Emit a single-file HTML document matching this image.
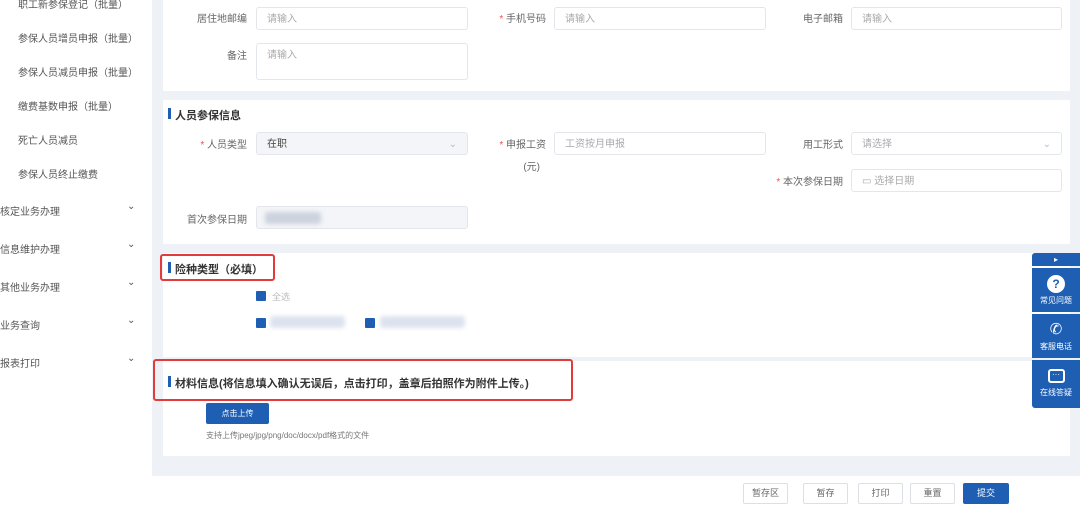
<!DOCTYPE html>
<html><head><meta charset="utf-8"><style>
*{margin:0;padding:0;box-sizing:border-box}
body{width:1080px;height:505px;overflow:hidden;background:#eef1f5;font-family:"Liberation Sans","Noto Sans CJK SC",sans-serif;font-size:10px;color:#666;position:relative}
.a{position:absolute}
.side{left:0;top:0;width:152px;height:505px;background:#fff}
.side div{position:absolute;font-size:10px;color:#555;white-space:nowrap}
.chev{color:#aaa;font-size:9px}
.card{background:#fff;position:absolute;left:163px;width:907px}
.lbl{position:absolute;font-size:10px;color:#666;text-align:right;white-space:nowrap;margin-top:-2px}
.lbl b{color:#e55;font-weight:normal}
.inp{position:absolute;border:1px solid #e3e6eb;border-radius:3px;background:#fff;color:#aaa;font-size:10px;padding:0 10px;line-height:24px;height:23px}
.h{position:absolute;font-size:11px;font-weight:bold;color:#333;padding-left:7px;white-space:nowrap}
.h:before{content:"";position:absolute;left:0;top:1px;width:3px;height:11px;background:#1e5fb4}
.red{position:absolute;border:2px solid #e23b3b;border-radius:3px}
.cb{position:absolute;width:10px;height:10px;background:#1e5fb4;border-radius:1px}
.blur{position:absolute;height:12px;background:#dde3ee;border-radius:3px;filter:blur(2px)}
.btn{position:absolute;top:483px;height:21px;border:1px solid #dcdfe6;background:#fff;font-size:9px;color:#666;text-align:center;line-height:19px;border-radius:2px}
.fl{position:absolute;left:1032px;width:48px;background:#1e5fb4;color:#fff;text-align:center;font-size:8px}
</style></head><body>
<div class="a side">
<div style="left:18px;top:-4px">职工新参保登记（批量）</div>
<div style="left:18px;top:30px">参保人员增员申报（批量）</div>
<div style="left:18px;top:64px">参保人员减员申报（批量）</div>
<div style="left:18px;top:98px">缴费基数申报（批量）</div>
<div style="left:18px;top:132px">死亡人员减员</div>
<div style="left:18px;top:166px">参保人员终止缴费</div>
<div style="left:0;top:203px">核定业务办理</div><div class="chev" style="left:127px;top:201px">⌄</div>
<div style="left:0;top:241px">信息维护办理</div><div class="chev" style="left:127px;top:239px">⌄</div>
<div style="left:0;top:279px">其他业务办理</div><div class="chev" style="left:127px;top:277px">⌄</div>
<div style="left:0;top:317px">业务查询</div><div class="chev" style="left:127px;top:315px">⌄</div>
<div style="left:0;top:355px">报表打印</div><div class="chev" style="left:127px;top:353px">⌄</div>
</div>

<div class="card" style="top:0;height:91px"></div>
<div class="lbl" style="left:190px;width:57px;top:12px">居住地邮编</div>
<div class="inp" style="left:256px;top:7px;width:212px">请输入</div>
<div class="lbl" style="left:480px;width:66px;top:12px"><b>* </b>手机号码</div>
<div class="inp" style="left:554px;top:7px;width:212px">请输入</div>
<div class="lbl" style="left:780px;width:63px;top:12px">电子邮箱</div>
<div class="inp" style="left:851px;top:7px;width:211px">请输入</div>
<div class="lbl" style="left:190px;width:57px;top:49px">备注</div>
<div class="inp" style="left:256px;top:43px;width:212px;height:37px">请输入</div>

<div class="card" style="top:100px;height:144px"></div>
<div class="h" style="left:168px;top:107px">人员参保信息</div>
<div class="lbl" style="left:180px;width:67px;top:138px"><b>* </b>人员类型</div>
<div class="inp" style="left:256px;top:132px;width:212px;background:#f3f5f8;color:#444">在职<span style="float:right;color:#bbb">⌄</span></div>
<div class="lbl" style="left:480px;width:66px;top:138px"><b>* </b>申报工资</div>
<div class="lbl" style="left:500px;width:40px;top:160px">(元)</div>
<div class="inp" style="left:554px;top:132px;width:212px">工资按月申报</div>
<div class="lbl" style="left:780px;width:63px;top:138px">用工形式</div>
<div class="inp" style="left:851px;top:132px;width:211px">请选择<span style="float:right;color:#bbb">⌄</span></div>
<div class="lbl" style="left:760px;width:83px;top:175px"><b>* </b>本次参保日期</div>
<div class="inp" style="left:851px;top:169px;width:211px">▭ 选择日期</div>
<div class="lbl" style="left:180px;width:67px;top:213px">首次参保日期</div>
<div class="inp" style="left:256px;top:206px;width:212px;background:#f3f5f8"></div>
<div class="blur" style="left:265px;top:212px;width:56px;background:#ccd3de"></div>

<div class="card" style="top:253px;height:104px"></div>
<div class="h" style="left:168px;top:261px">险种类型（必填）</div>
<div class="red" style="left:160px;top:254px;width:115px;height:27px"></div>
<div class="cb" style="left:256px;top:291px"></div>
<div class="a" style="left:272px;top:290px;color:#bbb;font-size:9px">全选</div>
<div class="cb" style="left:256px;top:318px"></div>
<div class="blur" style="left:270px;top:316px;width:75px"></div>
<div class="cb" style="left:365px;top:318px"></div>
<div class="blur" style="left:380px;top:316px;width:85px"></div>

<div class="card" style="top:361px;height:95px"></div>
<div class="h" style="left:168px;top:375px">材料信息(将信息填入确认无误后，点击打印，盖章后拍照作为附件上传。)</div>
<div class="red" style="left:153px;top:359px;width:420px;height:42px"></div>
<div class="a" style="left:206px;top:403px;width:63px;height:21px;background:#1e5fb4;color:#fff;font-size:8px;text-align:center;line-height:21px;border-radius:2px">点击上传</div>
<div class="a" style="left:206px;top:430px;font-size:8px;color:#777">支持上传jpeg/jpg/png/doc/docx/pdf格式的文件</div>

<div class="a" style="left:152px;top:476px;width:928px;height:29px;background:#fff"></div>
<div class="btn" style="left:743px;width:45px">暂存区</div>
<div class="btn" style="left:803px;width:45px">暂存</div>
<div class="btn" style="left:858px;width:45px">打印</div>
<div class="btn" style="left:910px;width:45px">重置</div>
<div class="btn" style="left:963px;width:46px;background:#1e5fb4;color:#fff;border-color:#1e5fb4">提交</div>

<div class="fl" style="top:253px;height:13px;line-height:13px;border-radius:3px 0 0 0">▸</div>
<div class="fl" style="top:268px;height:44px;padding-top:7px"><div style="width:18px;height:18px;border-radius:50%;background:#fff;color:#1e5fb4;font-weight:bold;font-size:12px;line-height:18px;margin:0 auto 2px">?</div>常见问题</div>
<div class="fl" style="top:314px;height:44px;padding-top:7px"><div style="font-size:15px;line-height:18px;margin-bottom:2px">✆</div>客服电话</div>
<div class="fl" style="top:360px;height:48px;padding-top:9px;border-radius:0 0 0 3px"><div style="width:17px;height:14px;border:2px solid #fff;border-radius:3px;margin:0 auto 4px;font-size:8px;line-height:7px">···</div>在线答疑</div>
</body></html>
